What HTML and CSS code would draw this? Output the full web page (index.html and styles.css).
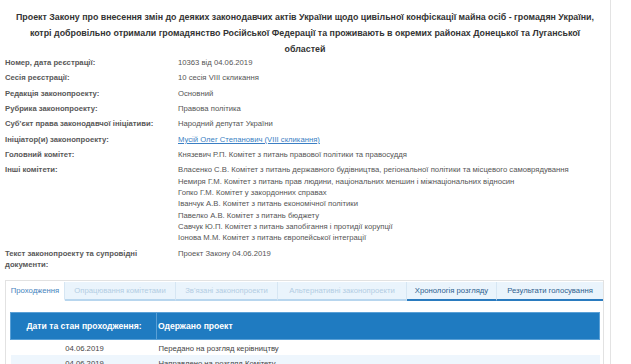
FILE: index.html
```html
<!DOCTYPE html>
<html lang="uk">
<head>
    <meta charset="UTF-8">
    <title>Картка законопроекту</title>
    <link rel="stylesheet" href="styles.css">
</head>
<body>
    <div class="page">
        <h1 class="title">Проект Закону про внесення змін до деяких законодавчих актів України щодо цивільної конфіскації майна осіб - громадян України,<br>котрі добровільно отримали громадянство Російської Федерації та проживають в окремих районах Донецької та Луганської<br>областей</h1>

        <!-- Картка законопроекту -->
        <div class="info">
            <div class="label">Номер, дата реєстрації:</div>
            <div class="value">10363 від 04.06.2019</div>

            <div class="label">Сесія реєстрації:</div>
            <div class="value">10 сесія VIII скликання</div>

            <div class="label">Редакція законопроекту:</div>
            <div class="value">Основний</div>

            <div class="label">Рубрика законопроекту:</div>
            <div class="value">Правова політика</div>

            <div class="label">Суб'єкт права законодавчої ініціативи:</div>
            <div class="value">Народний депутат України</div>

            <div class="label">Ініціатор(и) законопроекту:</div>
            <div class="value"><a href="#">Мусій Олег Степанович (VIII скликання)</a></div>

            <div class="label">Головний комітет:</div>
            <div class="value">Князевич Р.П. Комітет з питань правової політики та правосуддя</div>

            <div class="label">Інші комітети:</div>
            <div class="value">
                Власенко С.В. Комітет з питань державного будівництва, регіональної політики та місцевого самоврядування<br>
                Немиря Г.М. Комітет з питань прав людини, національних меншин і міжнаціональних відносин<br>
                Гопко Г.М. Комітет у закордонних справах<br>
                Іванчук А.В. Комітет з питань економічної політики<br>
                Павелко А.В. Комітет з питань бюджету<br>
                Савчук Ю.П. Комітет з питань запобігання і протидії корупції<br>
                Іонова М.М. Комітет з питань європейської інтеграції
            </div>

            <div class="label">Текст законопроекту та супровідні документи:</div>
            <div class="value">Проект Закону 04.06.2019</div>
        </div>

        <!-- Вкладки -->
        <div class="tabs-box">
            <div class="tabs">
                <span class="tab active">Проходження</span>
                <span class="tab disabled">Опрацювання комітетами</span>
                <span class="tab disabled">Зв'язані законопроекти</span>
                <span class="tab disabled">Альтернативні законопроекти</span>
                <span class="tab">Хронологія розгляду</span>
                <span class="tab">Результати голосування</span>
            </div>

            <table class="flow">
                <tr class="head">
                    <th class="date">Дати та стан проходження:</th>
                    <th>Одержано проект</th>
                </tr>
                <tr>
                    <td class="date">04.06.2019</td>
                    <td>Передано на розгляд керівництву</td>
                </tr>
                <tr class="alt">
                    <td class="date">04.06.2019</td>
                    <td>Направлено на розгляд Комітету</td>
                </tr>
            </table>
        </div>
    </div>
</body>
</html>
```

FILE: styles.css
```css
* {
    margin: 0;
    padding: 0;
    box-sizing: border-box;
}

body {
    font-family: "Liberation Sans", Arial, sans-serif;
    font-size: 7.7px;
    color: #555;
    background-color: white;
    overflow: hidden;
}

.page {
    width: 611px;
    height: 364px;
    border-right: 1px solid #e3e3e3;
}

.title {
    font-size: 8.85px;
    font-weight: bold;
    color: #333;
    text-align: center;
    line-height: 16px;
    padding: 9px 4px 0;
    white-space: nowrap;
}

.info {
    display: grid;
    grid-template-columns: 173px 1fr;
    row-gap: 4px;
    padding-left: 5px;
    line-height: 11.33px;
}

.label {
    font-weight: bold;
    color: #585858;
    padding-right: 23px;
}

.value a {
    color: #3b7fc4;
}

.tabs-box {
    margin: 10px 0 0 5px;
    width: 599px;
    border: 1px solid #e2e2e2;
    border-bottom: none;
    padding: 1px 4px 0 0;
    height: 100px;
}

.tabs {
    display: flex;
    margin-right: -4px;
    margin-bottom: 11px;
}

.tab {
    flex: none;
    height: 19px;
    line-height: 17px;
    text-align: center;
    background-color: #eaf4fc;
    color: #2e5f8f;
    border-right: 1px solid #d6e6f3;
    border-bottom: 2px solid #2a7bbf;
    white-space: nowrap;
}

.tab:nth-child(1) { width: 59px; }
.tab:nth-child(2) { width: 111px; }
.tab:nth-child(3) { width: 102px; }
.tab:nth-child(4) { width: 129px; }
.tab:nth-child(5) { width: 90px; }
.tab:nth-child(6) { width: 106px; border-right: none; }

.tab.disabled {
    color: #b3cde3;
    border-bottom-color: #b8d6ee;
}

.tab.active {
    background-color: white;
    color: #4583bd;
    border-bottom-color: white;
}

.flow {
    margin-left: 4px;
    width: 590px;
    border-collapse: collapse;
}

.flow .head th {
    background-color: #1f7bc1;
    color: white;
    font-size: 8.6px;
    font-weight: bold;
    height: 27px;
    text-align: left;
    padding-left: 1px;
    border: 1px solid #5aa0d6;
}

.flow .head th.date {
    text-align: center;
}

.flow .date {
    width: 146px;
    text-align: center;
}

.flow td {
    line-height: 13px;
    padding: 2px 0 0 2px;
    color: #444;
}

.flow .alt td {
    background-color: #eef6fd;
}
```
